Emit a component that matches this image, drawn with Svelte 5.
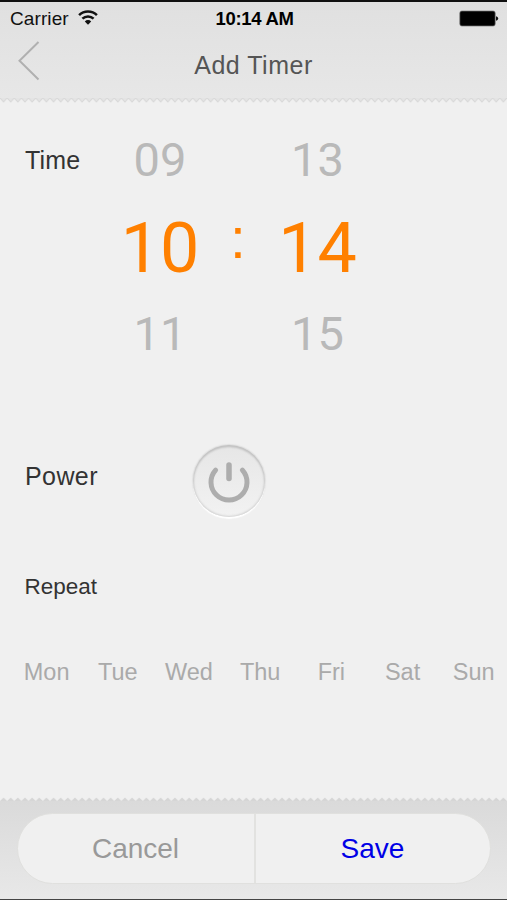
<script>
  const days = ['Mon', 'Tue', 'Wed', 'Thu', 'Fri', 'Sat', 'Sun'];
  const hours = ['09', '10', '11'];
  const minutes = ['13', '14', '15'];
</script>

<div class="screen">
  <header>
    <div class="status">
      <div class="carrier">
        <span>Carrier</span>
        <svg width="20" height="15" viewBox="0 0 20 15" fill="none" stroke="#111" stroke-width="2.5">
          <path d="M1.1 5.1a12.6 12.6 0 0 1 17.8 0" />
          <path d="M4.4 8.7a8 8 0 0 1 11.2 0" />
          <path d="M10 14.8L6.8 11.4a4.5 4.5 0 0 1 6.4 0z" fill="#111" stroke="none" />
        </svg>
      </div>
      <span class="clock">10:14 AM</span>
      <div class="battery">
        <svg width="40" height="17" viewBox="0 0 40 17">
          <rect x="0.8" y="1" width="35.4" height="15" rx="2" fill="#000" stroke="#777" stroke-width="0.7" />
          <path d="M37 6.2q2.2.6 2.2 2.3t-2.2 2.3z" fill="#111" />
        </svg>
      </div>
    </div>
    <nav>
      <svg class="back" width="24" height="40" viewBox="0 0 24 40" fill="none" stroke="#b0b0b0" stroke-width="2">
        <path d="M21.5 1L2.5 19.8L21.5 38.5" />
      </svg>
      <h1>Add Timer</h1>
    </nav>
  </header>
  <svg class="edge" width="507" height="6">
    <defs>
      <pattern id="teeth-down" width="7.14" height="6" patternUnits="userSpaceOnUse">
        <path d="M0 0H7.14L3.57 4z" fill="#e4e4e4" />
        <path d="M0 0L3.57 4L7.14 0" fill="none" stroke="#d8d8d8" stroke-width="1.1" />
      </pattern>
    </defs>
    <rect width="507" height="6" fill="url(#teeth-down)" />
  </svg>

  <main>
    <section class="time">
      <h2>Time</h2>
      <div class="wheel">
        {#each hours as h, i}
          <span class:active={i === 1}>{h}</span>
        {/each}
      </div>
      <div class="colon">:</div>
      <div class="wheel">
        {#each minutes as m, i}
          <span class:active={i === 1}>{m}</span>
        {/each}
      </div>
    </section>

    <section class="power">
      <h2>Power</h2>
      <button class="power-btn" aria-label="Power">
        <svg width="42" height="42" viewBox="0 0 42 42" fill="none" stroke="#adadad" stroke-width="5" stroke-linecap="round">
          <path d="M7.6 9.1A18 18 0 1 0 34.4 9.1" />
          <path d="M21 4V17.5" stroke-width="5.5" />
        </svg>
      </button>
    </section>

    <section class="repeat">
      <h3>Repeat</h3>
      <div class="days">
        {#each days as day}
          <span>{day}</span>
        {/each}
      </div>
    </section>
  </main>

  <svg class="edge" width="507" height="4">
    <defs>
      <pattern id="teeth-up" width="7.14" height="4" patternUnits="userSpaceOnUse">
        <path d="M0 4L3.57 0.6L7.14 4z" fill="#d6d6d6" />
      </pattern>
    </defs>
    <rect width="507" height="4" fill="url(#teeth-up)" />
  </svg>
  <footer>
    <div class="actions">
      <button class="cancel">Cancel</button>
      <button class="save">Save</button>
    </div>
  </footer>
</div>

<style>
  :global(body){margin:0;background:#f0f0f0}
  .screen{width:507px;height:900px;box-sizing:border-box;display:flex;flex-direction:column;overflow:hidden;background:#f0f0f0;border-top:2px solid #111;border-bottom:1px solid #444;font-family:"Liberation Sans",Arial,sans-serif}
  header{height:96px;background:linear-gradient(#e0e0e0,#e7e7e7)}
  .status{display:grid;grid-template-columns:1fr auto 1fr;align-items:center;height:33px;padding:0 8px 0 10px;color:#111}
  .carrier{display:flex;align-items:center;gap:9px;font-size:19px}
  .carrier span{letter-spacing:.1px}
  .carrier svg{margin-top:-3px}
  .clock{font-size:18.5px;font-weight:700;letter-spacing:-.3px;color:#000}
  .battery{display:flex;justify-content:flex-end}
  .battery svg{display:block;margin-top:-1px}
  nav{display:grid;grid-template-columns:60px 1fr 60px;align-items:center;height:60px}
  .back{margin-left:17px;margin-top:-8px}
  h1,h2,h3{margin:0;font-weight:400}
  h1{text-align:center;font-size:25px;letter-spacing:.5px;line-height:30px;color:#555}
  .edge{display:block;flex:none}
  main{flex:1;display:flex;flex-direction:column;color:#333}
  h2{font-size:25px;line-height:30px;padding-left:25px}
  h3{font-size:22.5px;line-height:28px;padding-left:24.5px}
  .time{display:grid;grid-template-columns:100px 120px 36px 123px;padding-top:41px;height:260px}
  .time h2{letter-spacing:.2px}
  .wheel{display:grid;grid-template-rows:30px 144px 30px;align-items:center;justify-items:center;font-family:Roboto,sans-serif;font-size:47px;line-height:30px;color:#b9b9b9}
  .wheel .active{padding-top:2px;font-size:70px;line-height:80px;color:#ff8000}
  .colon{padding-top:63px;text-align:center;font-size:57px;line-height:60px;color:#ff8000}
  .power{display:grid;grid-template-columns:192.5px auto;justify-content:start;margin-top:40px;height:74px}
  .power h2{padding-top:16px;letter-spacing:.4px}
  .power-btn{display:flex;align-items:center;justify-content:center;width:72px;height:72px;padding:2px 0 0;border:0;border-radius:50%;background:linear-gradient(#e6e6e6,#f2f2f2);box-shadow:0 2px 1px #fff,0 0 1px 1px #dfdfdf,inset 0 2px 2px #c2c2c2,inset 0 0 2px 1px #d4d4d4}
  .repeat{margin-top:54px}
  .days{display:grid;grid-template-columns:repeat(7,71.2px);margin-top:58px;padding-left:11px;font-size:23.5px;line-height:26px;text-align:center;color:#aaa}
  footer{height:98px;box-sizing:border-box;padding:12px 16px 0 17px;background:linear-gradient(#dadada,#e8e8e8)}
  .actions{display:grid;grid-template-columns:1fr 1fr;height:71px;box-sizing:border-box;border:1px solid #e0e0de;border-radius:36px;overflow:hidden;background:#f0f0f0}
  .actions button{border:0;padding:0 1px 0 0;background:none;font-family:inherit;font-size:28px;color:#999}
  .actions .save{border-left:2px solid #e2e2e0;color:#0000e6}
</style>
